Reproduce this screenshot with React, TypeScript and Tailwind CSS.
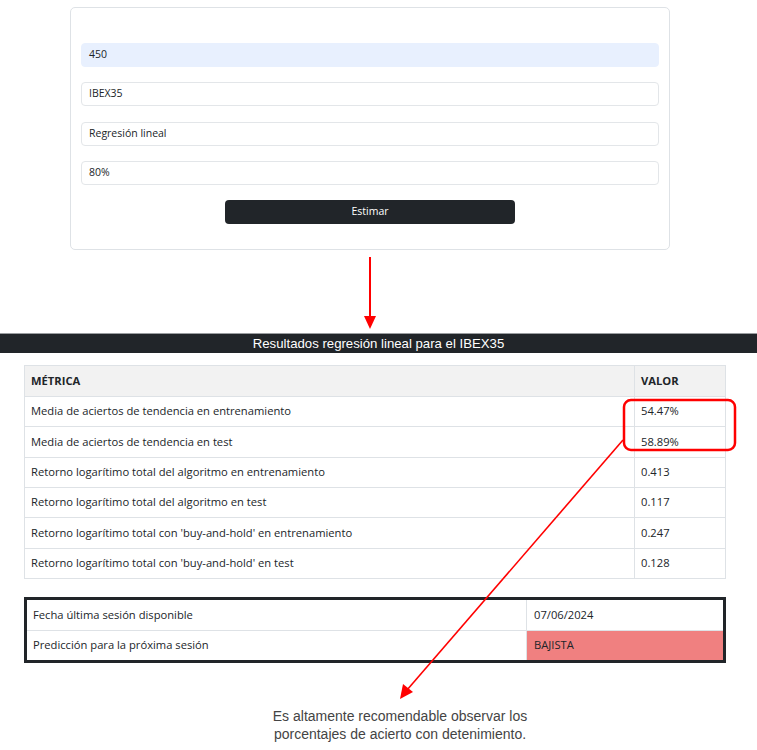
import React from "react";

const metrics: [string, string][] = [
  ["Media de aciertos de tendencia en entrenamiento", "54.47%"],
  ["Media de aciertos de tendencia en test", "58.89%"],
  ["Retorno logarítimo total del algoritmo en entrenamiento", "0.413"],
  ["Retorno logarítimo total del algoritmo en test", "0.117"],
  ["Retorno logarítimo total con 'buy-and-hold' en entrenamiento", "0.247"],
  ["Retorno logarítimo total con 'buy-and-hold' en test", "0.128"],
];

const fields = ["450", "IBEX35", "Regresión lineal", "80%"];

export default function App() {
  return (
    <div className="relative w-[757px] min-h-[750px] bg-white text-[#212529] font-['Open_Sans',sans-serif]">
      {/* Form card */}
      <div className="pt-[7px] pl-[70px]">
        <div className="w-[600px] h-[243px] border border-[#dee2e6] rounded-[5px] px-[10px] pt-[35px] flex flex-col gap-[15.3px]">
          {fields.map((f, i) => (
            <div
              key={f}
              className={`h-[24px] rounded-[4px] border flex items-center px-[7px] text-[10.5px] ${
                i === 0 ? "bg-[#e8f0fe] border-[#e8f0fe]" : "bg-white border-[#e3e6e9]"
              }`}
            >
              {f}
            </div>
          ))}
          <div className="flex justify-center">
            <button className="w-[290px] h-[24px] rounded-[4px] bg-[#212529] text-white text-[10.5px]">
              Estimar
            </button>
          </div>
        </div>
      </div>

      {/* Title bar */}
      <div className="mt-[83px] h-[20px] bg-[#212529] border-t border-[#9a9da0] flex items-center justify-center text-white text-[13.2px] font-['Liberation_Sans',Arial,sans-serif]">
        Resultados regresión lineal para el IBEX35
      </div>

      {/* Metrics table */}
      <div className="mt-[12px] px-[24px]">
        <div className="w-[702px] border border-[#dee2e6] text-[11.2px]">
          <div className="flex h-[30px] bg-[#f2f2f2] font-bold">
            <div className="flex-1 flex items-center px-[6px]">MÉTRICA</div>
            <div className="w-[91px] flex items-center px-[6px] border-l border-[#dee2e6]">VALOR</div>
          </div>
          {metrics.map(([k, v]) => (
            <div key={k} className="flex h-[30.35px] border-t border-[#dee2e6]">
              <div className="flex-1 flex items-center px-[6px]">{k}</div>
              <div className="w-[91px] flex items-center px-[6px] border-l border-[#dee2e6]">{v}</div>
            </div>
          ))}
        </div>
      </div>

      {/* Prediction table */}
      <div className="mt-[18px] px-[24px]">
        <div className="w-[702px] border-[3px] border-[#212529] text-[11.2px]">
          <div className="flex h-[30px]">
            <div className="flex-1 flex items-center px-[6px]">Fecha última sesión disponible</div>
            <div className="w-[197px] flex items-center px-[7px] border-l border-[#dee2e6]">07/06/2024</div>
          </div>
          <div className="flex h-[30px] border-t border-[#dee2e6]">
            <div className="flex-1 flex items-center px-[6px]">Predicción para la próxima sesión</div>
            <div className="w-[197px] flex items-center px-[7px] border-l border-[#dee2e6] bg-[#f08080]">BAJISTA</div>
          </div>
        </div>
      </div>

      {/* Note */}
      <div className="mt-[44px] pl-[43px] flex justify-center">
        <p className="text-center text-[14px] leading-[18px] text-[#444] font-['Liberation_Sans',Arial,sans-serif]">
          Es altamente recomendable observar los
          <br />
          porcentajes de acierto con detenimiento.
        </p>
      </div>

      {/* Annotations */}
      <svg className="absolute inset-0 pointer-events-none" width="757" height="750" viewBox="0 0 757 750">
        <line x1="370" y1="257" x2="370" y2="319" stroke="#ff0000" strokeWidth="2" />
        <polygon points="364,316 376,316 370,329" fill="#ff0000" />
        <rect x="624" y="400" width="111" height="50" rx="7" fill="none" stroke="#ff0000" strokeWidth="2.5" />
        <line x1="623" y1="440" x2="407" y2="690" stroke="#ff0000" strokeWidth="1.6" />
        <polygon points="400,699 403,684 413,692" fill="#ff0000" />
      </svg>
    </div>
  );
}
